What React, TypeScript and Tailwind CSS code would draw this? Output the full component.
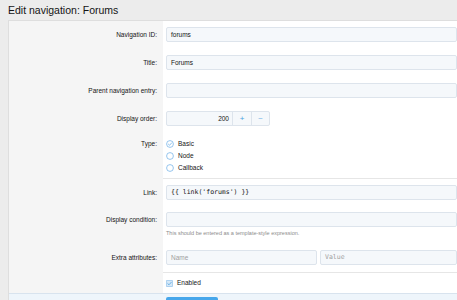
import React from "react";

const Label = ({ text, pt = "pt-[6px]", lh = "leading-[15px]" }: { text?: string; pt?: string; lh?: string }) => (
  <div className={`w-[154px] shrink-0 bg-[#f5f5f5] pr-[6px] text-right text-[6.5px] text-[#141414] ${pt} ${lh}`}>{text}</div>
);

const boxCls =
  "h-[15px] rounded-[2px] border border-[#dde4ec] bg-[#f5f8fb] px-[4px] text-[6.5px] leading-[13px]";
const inputCls = `${boxCls} text-[#141414]`;
const placeholderCls = `${boxCls} text-[#a0a0a0]`;

const Sep = () => (
  <div className="flex h-px">
    <div className="w-[154px] shrink-0 bg-[#f5f5f5]" />
    <div className="flex-1 bg-[#e6e6e6]" />
  </div>
);

const Radio = ({ checked, label }: { checked?: boolean; label: string }) => (
  <div className="flex h-[12px] items-center gap-[4px] text-[6.5px] text-[#141414]">
    <svg width="8" height="8" viewBox="0 0 16 16" className="shrink-0">
      <circle cx="8" cy="8" r="6.8" fill="#ffffff" stroke="#6aaee6" strokeWidth="1.4" />
      {checked && <path d="M4.8 8.3 L7.1 10.5 L11.3 5.8" fill="none" stroke="#6aaee6" strokeWidth="1.5" strokeLinecap="round" strokeLinejoin="round" />}
    </svg>
    <span>{label}</span>
  </div>
);

export default function App() {
  return (
    <div className="h-[300px] w-[457px] overflow-hidden bg-[#ececec] font-['Liberation_Sans',Arial,sans-serif]">
      <h1 className="h-[20px] pl-[8px] text-[10.5px] leading-[20px] text-[#141414]">Edit navigation: Forums</h1>
      <div className="ml-[8px] border-l border-t border-[#dedede] bg-white">
        <div className="flex">
          <Label text="Navigation ID:" />
          <div className="flex-1 pl-[3px] pt-[6px] pb-[7px]">
            <div className={inputCls}>forums</div>
          </div>
        </div>
        <div className="flex">
          <Label text="Title:" />
          <div className="flex-1 pl-[3px] pt-[6px] pb-[7px]">
            <div className={inputCls}>Forums</div>
          </div>
        </div>
        <div className="flex">
          <Label text="Parent navigation entry:" />
          <div className="flex-1 pl-[3px] pt-[6px] pb-[7px]">
            <div className={inputCls}></div>
          </div>
        </div>
        <div className="flex">
          <Label text="Display order:" />
          <div className="flex-1 pl-[3px] pt-[6px] pb-[7px]">
            <div className="flex h-[15px] w-[104px] rounded-[2px] border border-[#dde4ec] bg-[#f5f8fb] text-[6.5px] leading-[13px]">
              <div className="w-[65px] pr-[3px] text-right text-[#141414]">200</div>
              <div className="flex w-[19px] items-center justify-center border-l border-[#dde4ec] text-[8px] text-[#4aa0e0]">+</div>
              <div className="flex flex-1 items-center justify-center border-l border-[#dde4ec] text-[8px] text-[#7ab6e6]">−</div>
            </div>
          </div>
        </div>
        <div className="flex">
          <Label text="Type:" pt="pt-[5px]" lh="leading-[12px]" />
          <div className="flex-1 pl-[3px] pt-[5px] pb-[4px]">
            <Radio checked label="Basic" />
            <Radio label="Node" />
            <Radio label="Callback" />
          </div>
        </div>
        <Sep />
        <div className="flex">
          <Label text="Link:" />
          <div className="flex-1 pl-[3px] pt-[6px] pb-[6px]">
            <div className={`${inputCls} font-['DejaVu_Sans_Mono',monospace]`}>{"{{ link('forums') }}"}</div>
          </div>
        </div>
        <div className="flex">
          <Label text="Display condition:" />
          <div className="flex-1 pl-[3px] pt-[6px] pb-[5px]">
            <div className={inputCls}></div>
            <div className="mt-[1px] text-[5.5px] leading-[11px] text-[#8c8c8c]">This should be entered as a template-style expression.</div>
          </div>
        </div>
        <div className="flex">
          <Label text="Extra attributes:" />
          <div className="flex flex-1 gap-[3px] pl-[3px] pt-[6px] pb-[7px]">
            <div className={`${placeholderCls} w-[151px] shrink-0`}>Name</div>
            <div className={`${placeholderCls} flex-1 font-['DejaVu_Sans_Mono',monospace]`}>Value</div>
          </div>
        </div>
        <Sep />
        <div className="flex">
          <Label text="" pt="pt-[4px]" lh="leading-[12px]" />
          <div className="flex-1 pl-[3px] pt-[4px] pb-[4px]">
            <div className="flex h-[12px] items-center gap-[4px] text-[6.5px] text-[#141414]">
              <svg width="7" height="7" viewBox="0 0 14 14" className="shrink-0">
                <rect x="0.7" y="0.7" width="12.6" height="12.6" rx="1.5" fill="#d6e8f7" stroke="#7ab6e6" strokeWidth="1.2" />
                <path d="M3.5 7.2 L6 9.6 L10.6 4.5" fill="none" stroke="#4aa0e0" strokeWidth="1.5" strokeLinecap="round" strokeLinejoin="round" />
              </svg>
              <span>Enabled</span>
            </div>
          </div>
        </div>
        <div className="flex h-[20px] border-t border-[#d8e3ee] bg-[#eef5fb]">
          <div className="w-[154px] shrink-0" />
          <div className="flex-1 pl-[3px] pt-[3px]">
            <div className="h-[20px] w-[52px] rounded-[2px] bg-[#47a7eb]" />
          </div>
        </div>
      </div>
    </div>
  );
}
